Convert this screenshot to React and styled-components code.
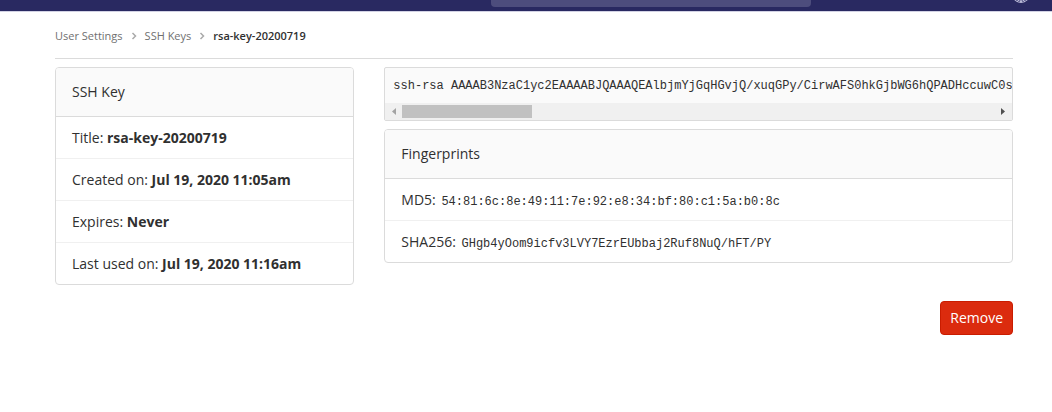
import React from "react";
import styled, { createGlobalStyle } from "styled-components";

const Global = createGlobalStyle`
  *, *::before, *::after { box-sizing: border-box; }
  body {
    margin: 0;
    background: #fff;
    color: #303030;
    font: 14px/20px "Open Sans", "Noto Sans", sans-serif;
  }
`;

const Navbar = styled.header`
  display: flex;
  justify-content: flex-end;
  align-items: flex-end;
  height: 12px;
  overflow: hidden;
  padding: 0 22px 0 16px;
  background: #292961;
  border-bottom: 1px solid #d2d2e4;
`;

const Search = styled.input`
  width: 320px;
  height: 32px;
  margin: 0 201px 4px 0;
  border: 0;
  border-radius: 4px;
  background: #4d4d7d;
  color: #fff;
`;

const Avatar = styled.svg`
  width: 18px;
  height: 18px;
  margin-bottom: 8px;
  flex: none;
`;

const Main = styled.main`
  padding: 0 39px 0 55px;
`;

const Breadcrumbs = styled.nav`
  display: flex;
  align-items: center;
  height: 47px;
  margin-bottom: 8px;
  padding-top: 2px;
  border-bottom: 1px solid #dbdbdb;
  font-size: 11px;
  line-height: 16px;
`;

const Crumb = styled.a`
  color: ${(p) => (p["aria-current"] ? "#303030" : "#707070")};
  font-weight: ${(p) => (p["aria-current"] ? 600 : 400)};
  text-decoration: none;
`;

const Chevron = styled.svg`
  width: 8px;
  height: 8px;
  margin: 0 7px;
  fill: none;
  stroke: #aaa;
`;

const Row = styled.div`
  display: flex;
  margin: 0 -15px;
`;

const Column = styled.div`
  flex: 0 0 calc(100% * ${(p) => p.$span} / 12);
  min-width: 0;
  padding: 0 15px;
`;

const Card = styled.section`
  margin-bottom: 16px;
  border: 1px solid #dbdbdb;
  border-radius: 4px;
  overflow: hidden;
`;

const CardHeader = styled.h2`
  margin: 0;
  padding: 14px 16px;
  border-bottom: 1px solid #dbdbdb;
  background: #fafafa;
  font-size: 14px;
  font-weight: 400;
  line-height: 20px;
`;

const List = styled.ul`
  margin: 0;
  padding: 0;
  list-style: none;
`;

const Item = styled.li`
  padding: 11px 16px 10px;
  white-space: nowrap;

  & + & { border-top: 1px solid #f0f0f0; }
`;

const Code = styled.code`
  margin-left: 2px;
  font: 12px/16px "Liberation Mono", monospace;
`;

const KeyBox = styled.div`
  margin-bottom: 8px;
  border: 1px solid #dbdbdb;
  border-radius: 2px;
  background: #fafafa;
  overflow: hidden;
`;

const KeyText = styled.pre`
  margin: 0;
  padding: 8px 0 7px 8px;
  overflow: hidden;
  font: 12px/20px "Liberation Mono", monospace;
`;

const Scrollbar = styled.div`
  display: flex;
  align-items: center;
  height: 17px;
  background: #f0f0f0;
`;

const ScrollButton = styled.button`
  display: grid;
  place-items: center;
  width: 17px;
  height: 17px;
  padding: 0;
  border: 0;
  background: none;
  color: ${(p) => (p.$idle ? "#a3a3a3" : "#505050")};
`;

const Track = styled.div`
  flex: 1;
`;

const Thumb = styled.div`
  width: 130px;
  height: 13px;
  background: #c1c1c1;
`;

const Actions = styled.div`
  display: flex;
  justify-content: flex-end;
`;

const DangerButton = styled.button`
  padding: 6px 9px;
  border: 1px solid #c91c00;
  border-radius: 4px;
  background: #db2b0e;
  color: #fff;
  font: inherit;
`;

const details = [
  ["Title:", "rsa-key-20200719"],
  ["Created on:", "Jul 19, 2020 11:05am"],
  ["Expires:", "Never"],
  ["Last used on:", "Jul 19, 2020 11:16am"],
];

const fingerprints = [
  ["MD5:", "54:81:6c:8e:49:11:7e:92:e8:34:bf:80:c1:5a:b0:8c"],
  ["SHA256:", "GHgb4yOom9icfv3LVY7EzrEUbbaj2Ruf8NuQ/hFT/PY"],
];

const publicKey =
  "ssh-rsa AAAAB3NzaC1yc2EAAAABJQAAAQEAlbjmYjGqHGvjQ/xuqGPy/CirwAFS0hkGjbWG6hQPADHccuwC0s";

const Separator = () => (
  <Chevron viewBox="0 0 8 8" aria-hidden="true">
    <path d="M2.5 1 5.5 4 2.5 7" strokeWidth="1.5" />
  </Chevron>
);

export default function App() {
  return (
    <>
      <Global />
      <Navbar>
        <Search type="search" aria-label="Search" />
        <Avatar viewBox="0 0 18 18" aria-hidden="true">
          <circle cx="9" cy="9" r="9" fill="#b9b9d6" />
          <path d="M4 15.5h2m1 0h1.500m1 0h1.500m1 0h2M6 16.500h2m2 0h2" stroke="#6a6a98" />
        </Avatar>
      </Navbar>
      <Main>
        <Breadcrumbs aria-label="Breadcrumb">
          <Crumb href="#settings">User Settings</Crumb>
          <Separator />
          <Crumb href="#keys">SSH Keys</Crumb>
          <Separator />
          <Crumb href="#key" aria-current="page">rsa-key-20200719</Crumb>
        </Breadcrumbs>
        <Row>
          <Column $span={4}>
            <Card>
              <CardHeader>SSH Key</CardHeader>
              <List>
                {details.map(([label, value]) => (
                  <Item key={label}>{label} <strong>{value}</strong></Item>
                ))}
              </List>
            </Card>
          </Column>
          <Column $span={8}>
            <KeyBox>
              <KeyText>{publicKey}</KeyText>
              <Scrollbar>
                <ScrollButton type="button" aria-label="Scroll left" $idle>
                  <svg width="4" height="7" viewBox="0 0 4 7"><path d="M4 0v7L0 3.500z" fill="currentColor" /></svg>
                </ScrollButton>
                <Track><Thumb /></Track>
                <ScrollButton type="button" aria-label="Scroll right">
                  <svg width="4" height="7" viewBox="0 0 4 7"><path d="M0 0v7l4-3.500z" fill="currentColor" /></svg>
                </ScrollButton>
              </Scrollbar>
            </KeyBox>
            <Card>
              <CardHeader>Fingerprints</CardHeader>
              <List>
                {fingerprints.map(([label, value]) => (
                  <Item key={label}>{label} <Code>{value}</Code></Item>
                ))}
              </List>
            </Card>
          </Column>
        </Row>
        <Actions>
          <DangerButton type="button">Remove</DangerButton>
        </Actions>
      </Main>
    </>
  );
}
